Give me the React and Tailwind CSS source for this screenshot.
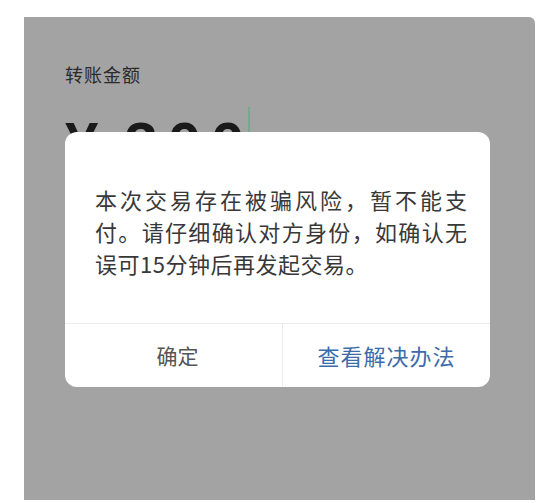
export default function App() {
  const cjk = { fontFamily: '"Noto Sans CJK SC", "Noto Sans", sans-serif' };
  return (
    <div className="w-[555px] h-[503px] bg-white pt-[17px] pl-[24px]" style={cjk}>
      <div className="relative w-[511px] h-[483px] bg-[#a3a3a3] rounded-tr-[6px] overflow-hidden">
        <div className="pl-[41px] pt-[44px]">
          <div className="text-[18px] leading-[26px] tracking-[1px] text-[#2a2a2a]">转账金额</div>
          <div className="mt-[27px] flex items-start h-[60px]">
            <span
              className="text-[60px] leading-[60px] font-bold text-[#1a1a1a] mr-[26px]"
              style={{ fontFamily: '"Liberation Sans", sans-serif' }}
            >
              ¥
            </span>
            <span
              className="text-[60px] leading-[60px] font-bold text-[#1a1a1a] tracking-[10px]"
              style={{ fontFamily: '"Liberation Sans", sans-serif' }}
            >
              300
            </span>
            <span className="w-[2px] h-[60px] bg-[#7aa88f] -mt-[7px] -ml-[6px]" />
          </div>
        </div>

        <div className="absolute left-[41px] top-[115px] w-[425px] h-[255px] bg-white rounded-[12px] flex flex-col">
          <div className="flex-1 pl-[30px] pt-[51px] text-[22px] leading-[32px] text-[#383838]">
            <div className="w-[372px] text-justify [text-align-last:justify]">本次交易存在被骗风险，暂不能支</div>
            <div className="w-[372px] text-justify [text-align-last:justify]">付。请仔细确认对方身份，如确认无</div>
            <div className="tracking-[0.5px]">误可15分钟后再发起交易。</div>
          </div>
          <div className="h-[64px] border-t border-[#ececec] flex">
            <div className="w-[217px] flex items-center justify-center text-[21px] text-[#555555] pl-[8px]">确定</div>
            <div className="flex-1 border-l border-[#ececec] flex items-center justify-center text-[22px] tracking-[1px] text-[#3d6bab]">
              查看解决办法
            </div>
          </div>
        </div>
      </div>
    </div>
  );
}
